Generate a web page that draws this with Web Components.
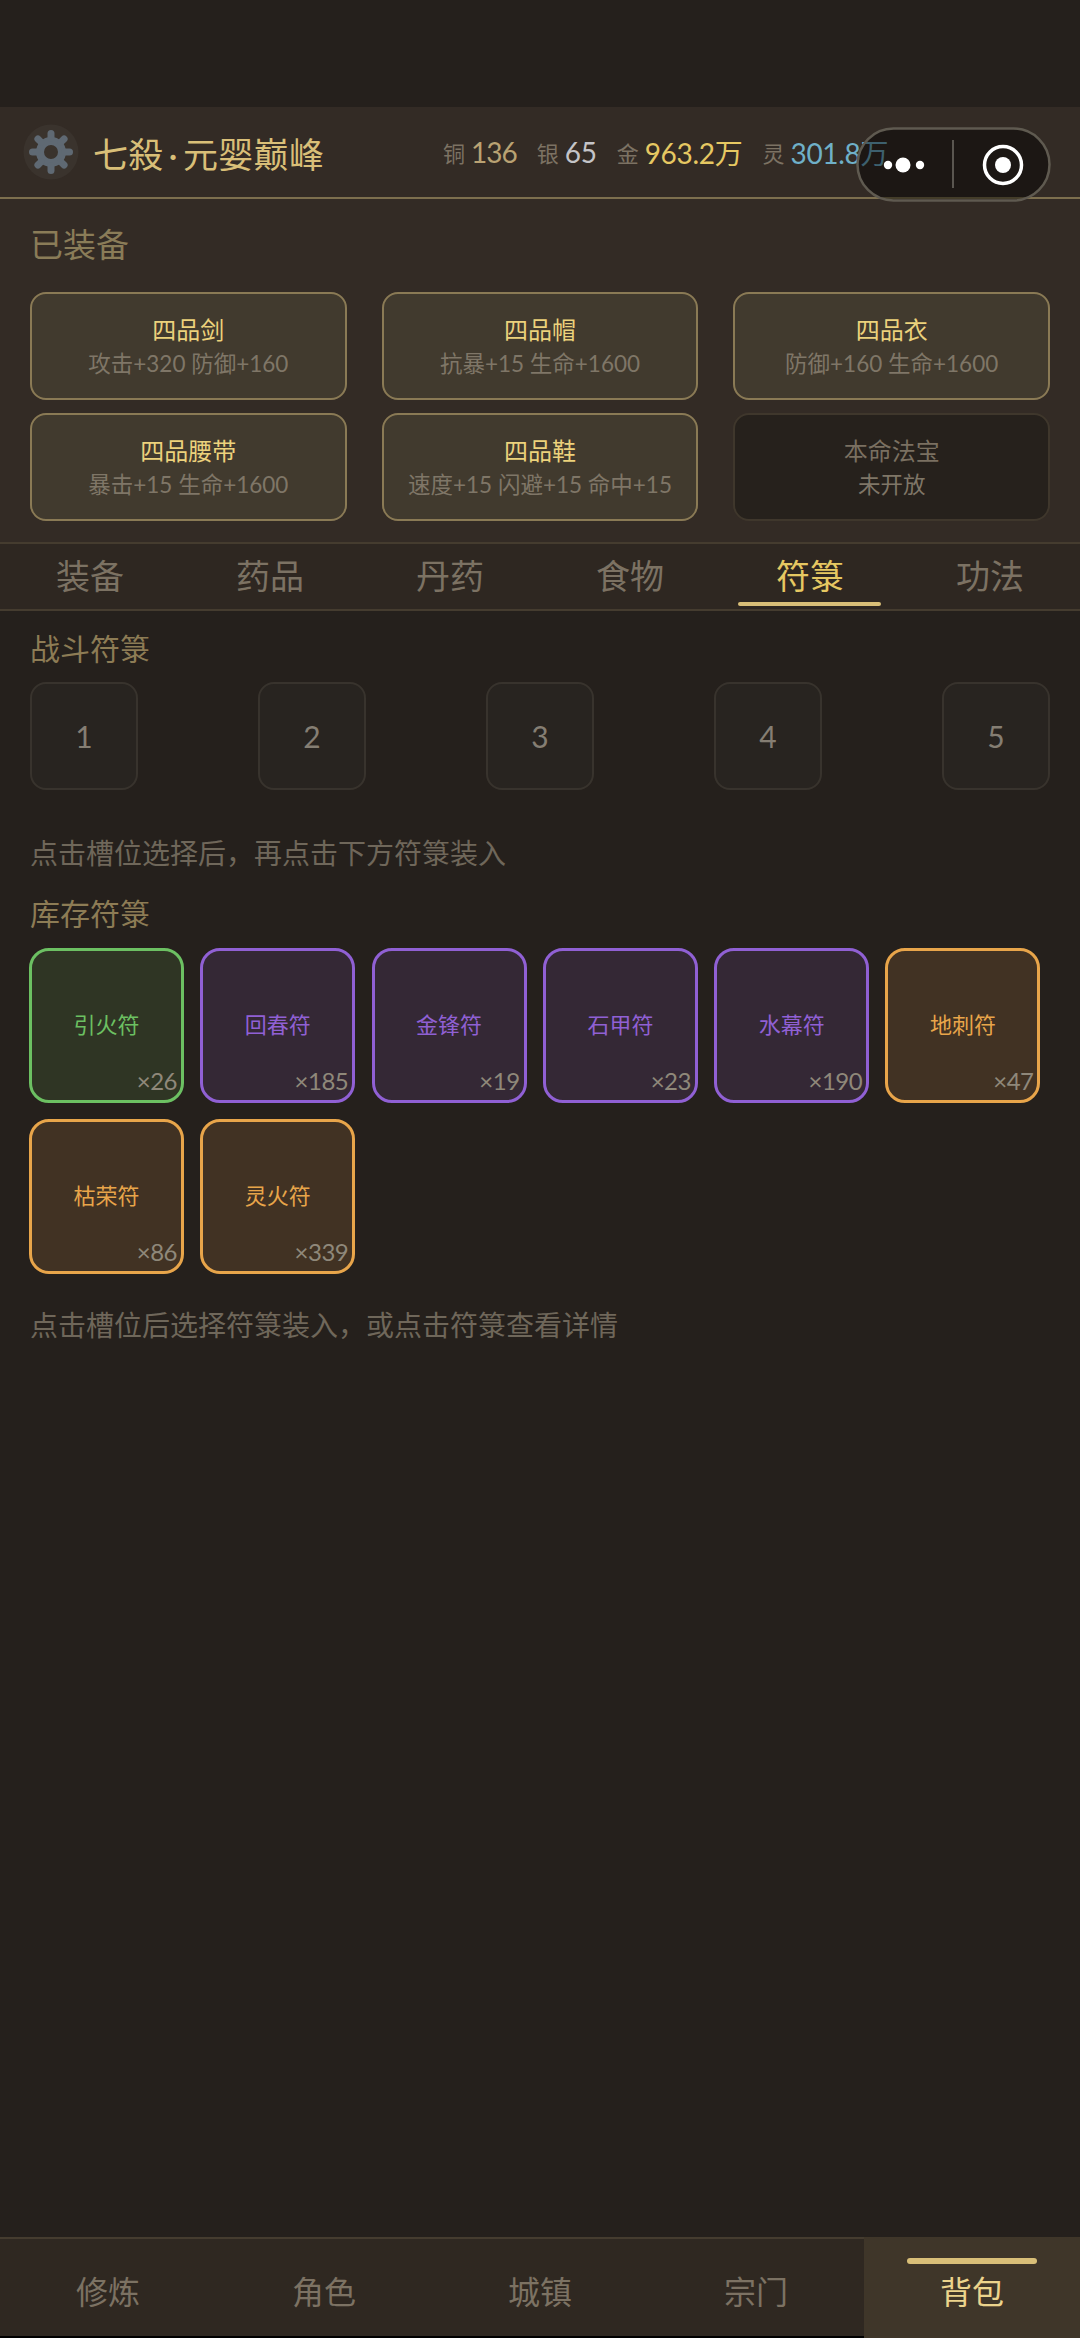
<!DOCTYPE html>
<html lang="zh">
<head>
<meta charset="utf-8">
<title>背包</title>
<style>
  html, body { margin: 0; padding: 0; background: #25201c; }
  body { font-family: Lato, "Noto Sans CJK SC", sans-serif; width: 1080px; height: 2338px; overflow: hidden; }
</style>
</head>
<body>
<game-app></game-app>

<script>
// status bar row of the header
class GameHeader extends HTMLElement {
  constructor() {
    super();
    const teeth = [0, 45, 90, 135, 180, 225, 270, 315]
      .map(a => `<line x1="0" y1="-14" x2="0" y2="-18.5" transform="rotate(${a})"/>`).join('');
    this.attachShadow({ mode: 'open' }).innerHTML = `
      <style>
        :host { display: flex; align-items: center; height: 90px; background: #332b25; border-bottom: 2px solid #7d6f4e; padding-left: 23px; color: #d9bf78; }
        .gear { width: 56px; height: 56px; flex: none; }
        .name { font-size: 35px; margin-left: 14px; width: 350px; white-space: nowrap; letter-spacing: .3px; }
        .name i { font-style: normal; margin: 0 5px; }
        .res { display: flex; align-items: center; gap: 20px; white-space: nowrap; }
        .res div { display: flex; align-items: center; gap: 6px; }
        .res span { font-size: 22px; color: #7c7263; }
        .res b { font-weight: 400; font-size: 28px; letter-spacing: -.3px; }
      </style>
      <svg class="gear" viewBox="-28 -28 56 56">
        <circle r="27.5" fill="#3a332d"/>
        <g stroke="#5f6973" stroke-width="7" stroke-linecap="round" fill="none">
          <circle r="11" stroke-width="8"/>${teeth}
        </g>
      </svg>
      <div class="name">七殺<i>·</i>元婴巅峰</div>
      <div class="res">
        <div><span>铜</span><b style="color:#b9a273;letter-spacing:-1px">136</b></div>
        <div><span>银</span><b style="color:#c4c4c8">65</b></div>
        <div><span>金</span><b style="color:#e6c862">963.2万</b></div>
        <div><span>灵</span><b style="color:#6fb0c8">301.8万</b></div>
      </div>`;
  }
}

// WeChat mini program capsule, sits over the header
class MenuCapsule extends HTMLElement {
  constructor() {
    super();
    this.attachShadow({ mode: 'open' }).innerHTML = `
      <style>
        :host { position: absolute; left: 856px; top: 127px; width: 195px; height: 75px; }
        svg { display: block; }
      </style>
      <svg width="195" height="75" viewBox="0 0 195 75">
        <rect x="1.5" y="1.5" width="192" height="72" rx="36" fill="#000" fill-opacity=".45" stroke="#5f5a50" stroke-width="2.5"/>
        <rect x="96" y="13" width="2" height="48" fill="#5a5650"/>
        <circle cx="32" cy="38" r="4.2" fill="#fff"/>
        <circle cx="47" cy="38" r="7.5" fill="#fff"/>
        <circle cx="64" cy="38" r="4.2" fill="#fff"/>
        <circle cx="147" cy="38" r="18.5" fill="none" stroke="#fff" stroke-width="3.5"/>
        <circle cx="147" cy="38" r="8" fill="#fff"/>
      </svg>`;
  }
}

// one equipment cell
class EquipCard extends HTMLElement {
  constructor() {
    super();
    this.attachShadow({ mode: 'open' }).innerHTML = `
      <style>
        :host { display: flex; flex-direction: column; align-items: center; height: 108px; box-sizing: border-box; padding-top: 19px; background: #413a2e; border: 2px solid #8a7a55; border-radius: 16px; }
        :host([empty]) { background: #26211c; border-color: #3f372c; }
        .t { font-size: 24px; line-height: 34px; color: #ecd27c; }
        :host([empty]) .t { color: #7a7061; }
        .s { font-size: 22.5px; line-height: 34px; color: #7f7667; white-space: nowrap; }
      </style>
      <div class="t"><slot name="title"></slot></div>
      <div class="s"><slot></slot></div>`;
  }
}

class TabBar extends HTMLElement {
  constructor() {
    super();
    const tabs = ['装备', '药品', '丹药', '食物', '符箓', '功法'];
    const active = 4;
    this.attachShadow({ mode: 'open' }).innerHTML = `
      <style>
        :host { display: grid; grid-template-columns: repeat(6, 180px); height: 65px; background: #2e2721; border-top: 2px solid #453c2f; border-bottom: 2px solid #453c2f; }
        .tab { position: relative; text-align: center; font-size: 34px; line-height: 64px; color: #7c7263; }
        .tab.on { color: #e6c862; }
        .tab.on::after { content: ""; position: absolute; left: 18px; right: 19px; bottom: 3px; height: 4px; border-radius: 2px; background: #d9bf78; }
      </style>
      ${tabs.map((t, i) => `<div class="tab${i === active ? ' on' : ''}">${t}</div>`).join('')}`;
  }
}

class SlotBox extends HTMLElement {
  constructor() {
    super();
    this.attachShadow({ mode: 'open' }).innerHTML = `
      <style>
        :host { display: flex; align-items: center; justify-content: center; width: 108px; height: 108px; box-sizing: border-box; background: #282420; border: 2px solid #38332d; border-radius: 16px; font-size: 30px; color: #857e73; }
      </style>
      <slot></slot>`;
  }
}

class ItemTile extends HTMLElement {
  constructor() {
    super();
    const count = this.getAttribute('count');
    this.attachShadow({ mode: 'open' }).innerHTML = `
      <style>
        :host { position: relative; display: flex; align-items: center; justify-content: center; width: 155px; height: 155px; box-sizing: border-box; border: 3px solid; border-radius: 20px; font-size: 22px; padding-bottom: 5px; }
        :host([q="green"]) { color: #6cc062; border-color: #6cc062; background: #2f3524; }
        :host([q="purple"]) { color: #9060d4; border-color: #9060d4; background: #342835; }
        :host([q="orange"]) { color: #e8a54a; border-color: #e8a54a; background: #413223; }
        .n { position: absolute; right: 4px; bottom: 4px; font-size: 24px; line-height: 30px; letter-spacing: -.5px; color: #8f887a; }
      </style>
      <slot></slot>
      <span class="n">×${count}</span>`;
  }
}

class BottomNav extends HTMLElement {
  constructor() {
    super();
    const items = ['修炼', '角色', '城镇', '宗门', '背包'];
    this.attachShadow({ mode: 'open' }).innerHTML = `
      <style>
        :host { display: grid; grid-template-columns: repeat(5, 216px); height: 99px; background: #2f2821; }
        .i { position: relative; text-align: center; font-size: 32px; line-height: 106px; color: #7c7263; border-top: 2px solid #453c2f; }
        .i.on { background: #3f3629; color: #ecd48c; border-top-color: #3f3629; }
        .i.on::before { content: ""; position: absolute; left: 43px; width: 130px; top: 19px; height: 6px; border-radius: 3px; background: #d9bf78; }
      </style>
      ${items.map((t, i) => `<div class="i${i === 4 ? ' on' : ''}">${t}</div>`).join('')}`;
  }
}

class GameApp extends HTMLElement {
  constructor() {
    super();
    this.attachShadow({ mode: 'open' }).innerHTML = `
      <style>
        :host { display: flex; flex-direction: column; height: 2338px; background: #25201c; position: relative; }
        .top { height: 107px; flex: none; }
        .panel { background: #332b25; height: 343px; padding: 0 30px; box-sizing: border-box; flex: none; }
        .panel h2 { margin: 0; height: 93px; line-height: 90px; font-weight: 400; font-size: 33px; color: #8a7c58; }
        .cards { display: grid; grid-template-columns: repeat(3, 1fr); column-gap: 35px; row-gap: 13px; }
        .main { flex: 1; padding: 0 30px; }
        h3 { margin: 0; font-weight: 400; font-size: 30px; color: #8d7c55; line-height: 40px; }
        .first { margin-top: 17px; }
        .slots { display: flex; justify-content: space-between; margin-top: 14px; }
        .hint { font-size: 28px; line-height: 40px; color: #6f675a; }
        .h1 { margin-top: 43px; }
        .second { margin-top: 20px; }
        .tiles { display: flex; flex-wrap: wrap; gap: 16px 16.3px; margin-top: 15px; width: 1020px; margin-left: -1px; }
        .h2 { margin-top: 31px; }
        .end { height: 2px; background: #000; flex: none; }
      </style>
      <div class="top"></div>
      <game-header></game-header>
      <menu-capsule></menu-capsule>
      <section class="panel">
        <h2>已装备</h2>
        <div class="cards">
          <equip-card><span slot="title">四品剑</span>攻击+320 防御+160</equip-card>
          <equip-card><span slot="title">四品帽</span>抗暴+15 生命+1600</equip-card>
          <equip-card><span slot="title">四品衣</span>防御+160 生命+1600</equip-card>
          <equip-card><span slot="title">四品腰带</span>暴击+15 生命+1600</equip-card>
          <equip-card><span slot="title">四品鞋</span>速度+15 闪避+15 命中+15</equip-card>
          <equip-card empty><span slot="title">本命法宝</span>未开放</equip-card>
        </div>
      </section>
      <tab-bar></tab-bar>
      <section class="main">
        <h3 class="first">战斗符箓</h3>
        <div class="slots">
          <slot-box>1</slot-box><slot-box>2</slot-box><slot-box>3</slot-box><slot-box>4</slot-box><slot-box>5</slot-box>
        </div>
        <div class="hint h1">点击槽位选择后，再点击下方符箓装入</div>
        <h3 class="second">库存符箓</h3>
        <div class="tiles">
          <item-tile q="green" count="26">引火符</item-tile>
          <item-tile q="purple" count="185">回春符</item-tile>
          <item-tile q="purple" count="19">金锋符</item-tile>
          <item-tile q="purple" count="23">石甲符</item-tile>
          <item-tile q="purple" count="190">水幕符</item-tile>
          <item-tile q="orange" count="47">地刺符</item-tile>
          <item-tile q="orange" count="86">枯荣符</item-tile>
          <item-tile q="orange" count="339">灵火符</item-tile>
        </div>
        <div class="hint h2">点击槽位后选择符箓装入，或点击符箓查看详情</div>
      </section>
      <bottom-nav></bottom-nav>
      <div class="end"></div>`;
  }
}

customElements.define('game-header', GameHeader);
customElements.define('menu-capsule', MenuCapsule);
customElements.define('equip-card', EquipCard);
customElements.define('tab-bar', TabBar);
customElements.define('slot-box', SlotBox);
customElements.define('item-tile', ItemTile);
customElements.define('bottom-nav', BottomNav);
customElements.define('game-app', GameApp);
</script>
</body>
</html>
